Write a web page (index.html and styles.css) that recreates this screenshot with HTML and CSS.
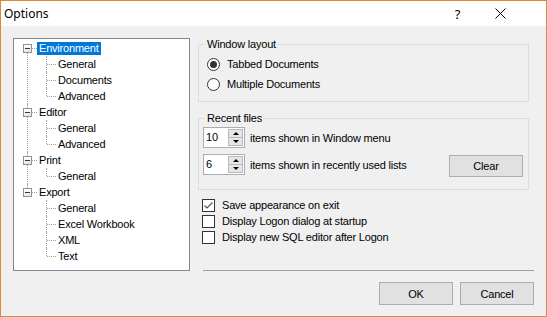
FILE: index.html
```html
<!DOCTYPE html>
<html lang="en">
<head>
    <meta charset="UTF-8">
    <title>Options</title>
    <link rel="stylesheet" href="styles.css">
</head>
<body>
    <div class="window">
        <div class="titlebar">
            <span class="title">Options</span>
            <span class="caption-btn">?</span>
            <span class="caption-btn">
                <svg width="11" height="11" viewBox="0 0 11 11"><path d="M0.5 0.5L10.5 10.5M10.5 0.5L0.5 10.5" stroke="#000" stroke-width="1" fill="none"/></svg>
            </span>
        </div>
        <div class="content">
            <div class="tree">
                <ul class="tree-root">
                    <li>
                        <div class="row"><span class="expander"></span><span class="stub"></span><span class="label selected">Environment</span></div>
                        <ul class="children">
                            <li><div class="row"><span class="stub"></span><span class="label">General</span></div></li>
                            <li><div class="row"><span class="stub"></span><span class="label">Documents</span></div></li>
                            <li><div class="row"><span class="stub"></span><span class="label">Advanced</span></div></li>
                        </ul>
                    </li>
                    <li>
                        <div class="row"><span class="expander"></span><span class="stub"></span><span class="label">Editor</span></div>
                        <ul class="children">
                            <li><div class="row"><span class="stub"></span><span class="label">General</span></div></li>
                            <li><div class="row"><span class="stub"></span><span class="label">Advanced</span></div></li>
                        </ul>
                    </li>
                    <li>
                        <div class="row"><span class="expander"></span><span class="stub"></span><span class="label">Print</span></div>
                        <ul class="children">
                            <li><div class="row"><span class="stub"></span><span class="label">General</span></div></li>
                        </ul>
                    </li>
                    <li>
                        <div class="row"><span class="expander"></span><span class="stub"></span><span class="label">Export</span></div>
                        <ul class="children">
                            <li><div class="row"><span class="stub"></span><span class="label">General</span></div></li>
                            <li><div class="row"><span class="stub"></span><span class="label">Excel Workbook</span></div></li>
                            <li><div class="row"><span class="stub"></span><span class="label">XML</span></div></li>
                            <li><div class="row"><span class="stub"></span><span class="label">Text</span></div></li>
                        </ul>
                    </li>
                </ul>
            </div>

            <div class="settings">
                <fieldset class="group layout-group">
                    <legend>Window layout</legend>
                    <div class="option"><span class="radio checked"></span><span>Tabbed Documents</span></div>
                    <div class="option"><span class="radio"></span><span>Multiple Documents</span></div>
                </fieldset>

                <fieldset class="group recent-group">
                    <legend>Recent files</legend>
                    <div class="spin-row">
                        <div class="spin"><span class="spin-value">10</span><span class="spin-btns"><span class="spin-up"></span><span class="spin-down"></span></span></div>
                        <span>items shown in Window menu</span>
                    </div>
                    <div class="spin-row">
                        <div class="spin"><span class="spin-value">6</span><span class="spin-btns"><span class="spin-up"></span><span class="spin-down"></span></span></div>
                        <span>items shown in recently used lists</span>
                        <button class="btn clear-btn">Clear</button>
                    </div>
                </fieldset>

                <div class="checks">
                    <div class="check-row">
                        <span class="check"><svg width="11" height="11" viewBox="0 0 11 11"><path d="M1.5 5.5L4 8L9.5 2.5" stroke="#555" stroke-width="1.2" fill="none"/></svg></span>
                        <span>Save appearance on exit</span>
                    </div>
                    <div class="check-row"><span class="check"></span><span>Display Logon dialog at startup</span></div>
                    <div class="check-row"><span class="check"></span><span>Display new SQL editor after Logon</span></div>
                </div>

                <div class="separator"></div>

                <div class="actions">
                    <button class="btn">OK</button>
                    <button class="btn">Cancel</button>
                </div>
            </div>
        </div>
    </div>
</body>
</html>
```

FILE: styles.css
```css
body {
    margin: 0;
    padding: 0;
    font-family: 'Liberation Sans', Arial, sans-serif;
    font-size: 11px;
    letter-spacing: -0.2px;
    color: #000;
}
.window {
    width: 547px;
    height: 317px;
    box-sizing: border-box;
    border: 1px solid #db8a3a;
    background-color: #f0f0f0;
    display: flex;
    flex-direction: column;
}
.titlebar {
    height: 25px;
    background-color: #fff;
    display: flex;
    align-items: center;
    padding: 0 24px 0 3px;
}
.title {
    flex-grow: 1;
    font-family: 'Noto Sans', 'Open Sans', sans-serif;
    font-size: 12px;
    letter-spacing: 0;
}
.caption-btn {
    width: 43px;
    display: flex;
    justify-content: center;
    align-items: center;
    font-family: 'Noto Sans', sans-serif;
    font-size: 13px;
    letter-spacing: 0;
}
.content {
    flex-grow: 1;
    display: flex;
    padding: 12px 12px 0 12px;
}

/* tree view */
.tree {
    width: 177px;
    height: 233px;
    box-sizing: border-box;
    border: 1px solid #828790;
    background-color: #fff;
}
.tree ul {
    list-style: none;
    margin: 0;
    padding: 0;
}
.tree-root {
    padding-top: 1px !important;
}
.tree li {
    position: relative;
}
.tree-root > li::before,
.children > li::before {
    content: '';
    position: absolute;
    top: 0;
    bottom: 0;
    border-left: 1px dotted #a0a0a0;
}
.tree-root > li::before {
    left: 13px;
}
.tree-root > li:first-child::before {
    top: 8px;
}
.tree-root > li:last-child::before {
    bottom: auto;
    height: 8px;
}
.children > li::before {
    left: 32px;
}
.children > li:last-child::before {
    bottom: auto;
    height: 8px;
}
.row {
    height: 16px;
    display: flex;
    align-items: center;
}
.tree-root > li > .row {
    padding-left: 9px;
}
.children > li > .row {
    padding-left: 33px;
}
.expander {
    position: relative;
    z-index: 1;
    width: 9px;
    height: 9px;
    box-sizing: border-box;
    border: 1px solid #919191;
    background: linear-gradient(#fff, #e6e6e6);
    display: flex;
    align-items: center;
    justify-content: center;
}
.expander::after {
    content: '';
    width: 5px;
    height: 1px;
    background-color: #1f3a6b;
}
.stub {
    width: 5px;
    height: 0;
    border-top: 1px dotted #a0a0a0;
}
.children .stub {
    width: 9px;
}
.label {
    padding: 0 2px;
    line-height: 13px;
    white-space: nowrap;
}
.label.selected {
    background-color: #0078d7;
    color: #fff;
}

/* right side */
.settings {
    flex-grow: 1;
    margin-left: 8px;
    display: flex;
    flex-direction: column;
}
.group {
    width: 331px;
    box-sizing: border-box;
    margin: 0;
    border: 1px solid #dcdcdc;
    min-inline-size: 0;
}
.group legend {
    margin-left: -3px;
    padding: 0 1px 0 3px;
    line-height: 13px;
}
.layout-group {
    padding: 3px 0 7px 8px;
}
.option {
    height: 20px;
    display: flex;
    align-items: center;
    gap: 7px;
}
.radio {
    width: 13px;
    height: 13px;
    box-sizing: border-box;
    border: 1px solid #333;
    border-radius: 50%;
    background-color: #fff;
    display: flex;
    align-items: center;
    justify-content: center;
}
.radio.checked::after {
    content: '';
    width: 7px;
    height: 7px;
    border-radius: 50%;
    background-color: #333;
}
.recent-group {
    margin-top: 10px;
    padding: 2px 5px 14px 4px;
    display: flex;
    flex-direction: column;
    gap: 6px;
}
.recent-group legend {
    margin-left: 1px;
}
.spin-row {
    height: 21px;
    display: flex;
    align-items: center;
    gap: 5px;
}
.spin {
    width: 42px;
    height: 21px;
    box-sizing: border-box;
    border: 1px solid #abadb3;
    background-color: #fff;
    display: flex;
}
.spin-value {
    flex-grow: 1;
    padding-left: 2px;
    line-height: 19px;
}
.spin-btns {
    width: 15px;
    margin: 1px 1px 1px 0;
    display: flex;
    flex-direction: column;
}
.spin-up, .spin-down {
    flex: 1;
    border: 1px solid #b9b9b9;
    background-color: #e6e6e6;
    display: flex;
    align-items: center;
    justify-content: center;
}
.spin-down {
    border-top: none;
}
.spin-up::after {
    content: '';
    border-left: 3px solid transparent;
    border-right: 3px solid transparent;
    border-bottom: 3px solid #000;
}
.spin-down::after {
    content: '';
    border-left: 3px solid transparent;
    border-right: 3px solid transparent;
    border-top: 3px solid #000;
}
.btn {
    width: 74px;
    height: 23px;
    padding: 0;
    border: 1px solid #adadad;
    background-color: #e1e1e1;
    font-family: inherit;
    font-size: 11px;
    letter-spacing: -0.2px;
    color: #000;
}
.clear-btn {
    height: 22px;
    margin-left: auto;
    align-self: flex-start;
    margin-top: 1px;
}
.checks {
    margin-top: 7px;
    padding-left: 4px;
}
.check-row {
    height: 16px;
    display: flex;
    align-items: center;
    gap: 7px;
}
.check {
    width: 13px;
    height: 13px;
    box-sizing: border-box;
    border: 1px solid #333;
    background-color: #fff;
    display: flex;
}
.separator {
    margin: 25px 0 0 5px;
    height: 1px;
    background-color: #a0a0a0;
}
.actions {
    margin-top: 11px;
    display: flex;
    justify-content: flex-end;
    gap: 7px;
}
```
